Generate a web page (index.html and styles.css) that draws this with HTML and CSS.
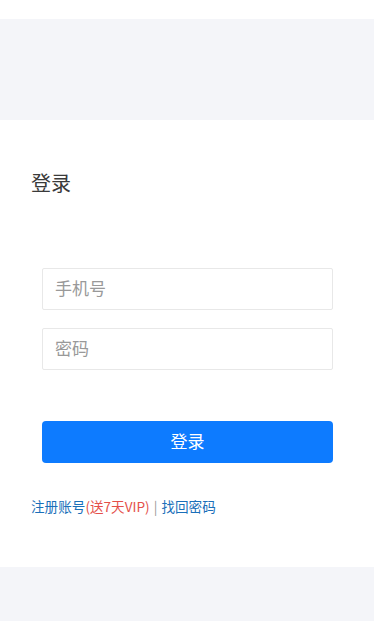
FILE: index.html
```html
<!DOCTYPE html>
<html lang="zh">
<head>
<meta charset="utf-8">
<link rel="stylesheet" href="styles.css">
</head>
<body>
<div class="top"></div>
<div class="band"></div>
<div class="card">
  <h1 class="title">登录</h1>
  <div class="form">
    <div class="field"><span class="ph">手机号</span></div>
    <div class="field"><span class="ph">密码</span></div>
    <div class="btn">登录</div>
  </div>
  <div class="links"><span class="blue">注册账号</span><span class="red">(送7天VIP)</span><span class="sep">|</span><span class="blue">找回密码</span></div>
</div>
<div class="bottom"></div>
</body>
</html>
```
FILE: styles.css
```css
html, body {
  margin: 0;
  padding: 0;
  background: #f4f5f9;
  font-family: "Noto Sans CJK SC", "Noto Sans", sans-serif;
}
.top { height: 19px; background: #ffffff; }
.band { height: 101px; background: #f4f5f9; }
.card {
  background: #ffffff;
  height: 447px;
  box-sizing: border-box;
  padding: 48px 0 0 31px;
}
.title {
  margin: 0;
  font-size: 20px;
  font-weight: normal;
  color: #3a3a3a;
  line-height: 30px;
}
.form {
  padding: 70px 41px 0 11px;
  display: flex;
  flex-direction: column;
}
.field {
  height: 42px;
  box-sizing: border-box;
  border: 1px solid #e8e8e8;
  border-radius: 2px;
  display: flex;
  align-items: center;
  padding: 0 0 3px 12px;
  margin-bottom: 18px;
}
.ph { font-size: 17px; color: #999999; }
.btn {
  margin-top: 33px;
  height: 42px;
  background: #0d7bff;
  border-radius: 4px;
  color: #ffffff;
  font-size: 17px;
  display: flex;
  align-items: center;
  justify-content: center;
  padding-bottom: 3px;
  box-sizing: border-box;
}
.links {
  margin-top: 33px;
  font-size: 13.6px;
  line-height: 20px;
}
.blue { color: #1a6fb9; }
.red { color: #e4504a; }
.sep { color: #999999; margin: 0 4px; }
.bottom { height: 54px; background: #f4f5f9; }
```
